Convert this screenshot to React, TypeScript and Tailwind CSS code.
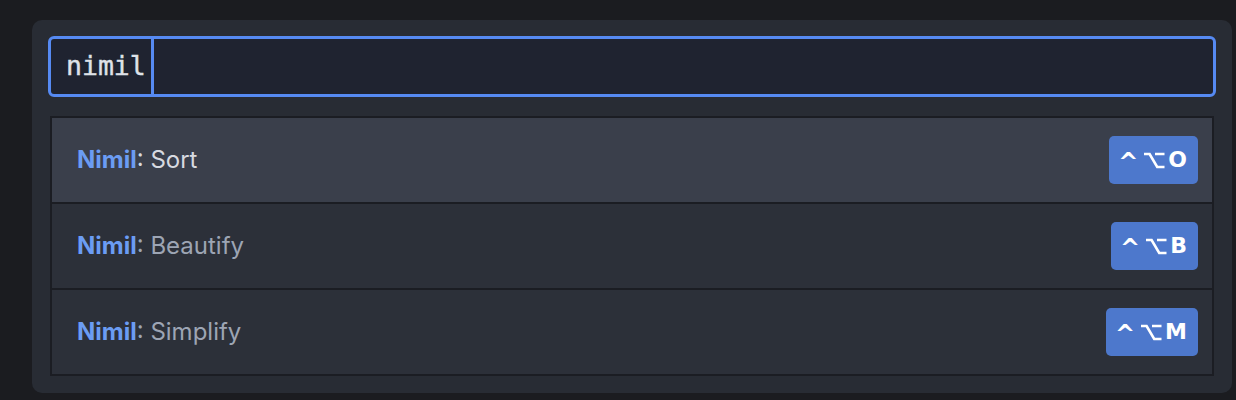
import React from "react";

const items = [
  { name: "Sort", key: "O", selected: true },
  { name: "Beautify", key: "B", selected: false },
  { name: "Simplify", key: "M", selected: false },
];

function OptionKey() {
  return (
    <svg width="21" height="17" viewBox="0 0 21 17" className="ml-[6px] mr-[3px]">
      <path
        d="M0 2 H5.6 L13.2 15 H20.5 M11 2 H20.5"
        fill="none"
        stroke="white"
        strokeWidth="2.6"
        strokeLinejoin="miter"
      />
    </svg>
  );
}

export default function App() {
  return (
    <div className="w-[1236px] h-[400px] bg-[#1b1c20] overflow-hidden pt-[20px] pl-[32px]">
      <div className="w-[1200px] h-[373px] bg-[#282c34] rounded-[10px] p-[16px] flex flex-col">
        <div className="h-[61px] rounded-[6px] border-[3px] border-[#568af2] bg-[#1f2330] flex items-center pl-[15px]">
          <span
            className="text-[26.5px] text-[#dfe2e8] leading-none [-webkit-text-stroke:0.4px_#dfe2e8]"
            style={{ fontFamily: '"DejaVu Sans Mono", monospace' }}
          >
            nimil
          </span>
          <div className="w-[3px] h-full bg-[#568af2] ml-[5px]" />
        </div>
        <div className="mt-[19px] mx-[2px] border-[2px] border-[#1b1d23] flex flex-col gap-[2px] bg-[#1b1d23]">
          {items.map((it) => (
            <div
              key={it.name}
              className={`h-[84px] flex items-center justify-between pl-[25px] pr-[14px] ${
                it.selected ? "bg-[#3a3f4b]" : "bg-[#2c3039]"
              }`}
            >
              <div
                className="text-[24px] leading-none"
                style={{ fontFamily: "Inter, sans-serif" }}
              >
                <span className="font-bold text-[#6b9cf3]">Nimil</span>
                <span className={it.selected ? "text-[#d7dae0]" : "text-[#9da5b4]"}>
                  : {it.name}
                </span>
              </div>
              <div
                className="h-[48px] pl-[9px] pr-[11px] rounded-[5px] bg-[#4d78cc] text-white font-bold text-[22px] flex items-center leading-none"
                style={{ fontFamily: '"DejaVu Sans", sans-serif' }}
              >
                <span className="text-[24px] mt-[3px]">^</span>
                <OptionKey />
                <span>{it.key}</span>
              </div>
            </div>
          ))}
        </div>
      </div>
    </div>
  );
}
